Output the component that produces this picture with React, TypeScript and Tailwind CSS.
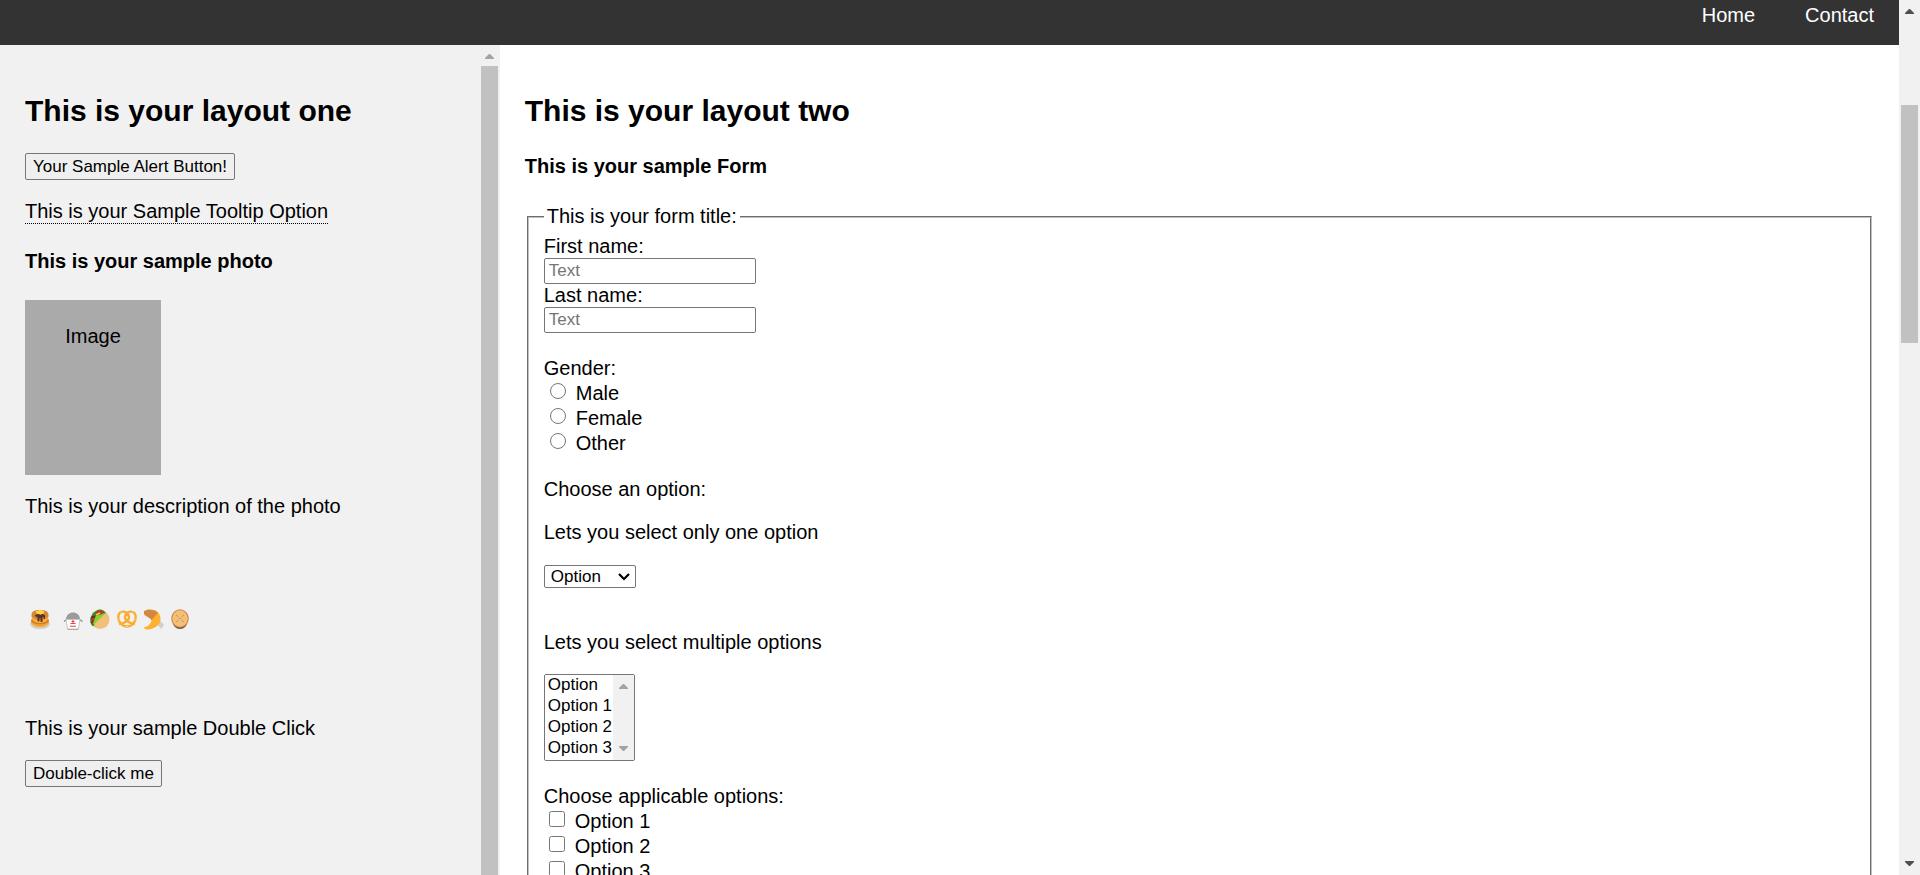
import React from "react";

function Arrow({ down = false, className }: { down?: boolean; className: string }) {
  return (
    <svg width="9" height="5" viewBox="0 0 9 5" className={className} fill="currentColor" aria-hidden="true">
      <path d={down ? "M0 0h9v1L5 5H4L0 1z" : "M4 0h1l4 4v1H0V4z"} />
    </svg>
  );
}

function Pancakes() {
  return (
    <svg width="20" height="21" viewBox="0 0 20 21" aria-hidden="true">
      <path d="M0 14c0 4 4 6 10 6s10-2 10-6l-3-2H3z" fill="#d0d0d0" />
      <path d="M1 12c0 4 4 6 9 6s9-2 9-6z" fill="#f9a72b" />
      <ellipse cx="10" cy="11.500" rx="9" ry="4" fill="#c87f35" />
      <path d="M1.500 7c0 5 4 7 8.500 7s8.500-2 8.500-7z" fill="#ffb02e" />
      <path d="M1.500 5.500C2 2 5 1 10 1s8 1 8.500 4.500c.5 3-3.500 5.500-8.500 5.500S1 8.500 1.500 5.500z" fill="#d3883e" />
      <path d="M5 6c2-1.500 8-1.500 10 0v3c0 1.500-1.500 1.500-1.500 0V8h-1v4c0 1.600-2 1.600-2 0V9h-1v2.500c0 1.500-2 1.500-2 0V8C5 8 5 7 5 6z" fill="#5b3428" />
      <path d="M6 2.500L10.500.500 14 2.500V4l-3.500 1.800L6 4z" fill="#fcd53f" />
    </svg>
  );
}

function Takeout() {
  return (
    <svg width="20" height="21" viewBox="0 0 20 21" aria-hidden="true">
      <path d="M1 12.500L4 10h12l3.500 2.500" fill="none" stroke="#858585" strokeWidth="1.200" />
      <path d="M3 10.500C3 6 6.500 3.500 10 3.500s7 2.500 7 7z" fill="#9b9b9b" />
      <path d="M3 10.500h14L15.500 20h-11z" fill="#fff" stroke="#c6c6c6" />
      <path d="M4.700 20.500h10.600" stroke="#aaa" />
      <path d="M8.500 12.500h3M10 11v3M7.500 14.500h5M7 17.200h6" stroke="#f03e45" strokeWidth="1.100" />
    </svg>
  );
}

function Flatbread() {
  return (
    <svg width="20" height="21" viewBox="0 0 20 21" aria-hidden="true">
      <circle cx="10" cy="10.500" r="9.500" fill="#f3c07b" />
      <path d="M1 15C-1 10 1 8 2 6c0-2 2-3 4-4 2-2 6-2 8 0l2 2L5 16c-2 2-3 1-4-1z" fill="#3f8a25" />
      <path d="M7 2h6l1 2-4 2-4 1zM2 8l3-2v3l-2 6-2-3z" fill="#d02a32" />
      <path d="M1 8.500l4-1M1 14l3-2" stroke="#5d2b35" strokeWidth="1.500" />
      <path d="M3 14l3-7 9-3-1 4-9 9z" fill="#83d52c" />
      <path d="M16.500 4.500C17 12 11 17 4 17.500l1-3L16 4z" fill="#f3c07b" />
      <path d="M6 6l4-2" stroke="#ffce46" strokeWidth="1.500" />
    </svg>
  );
}

function Pretzel() {
  return (
    <svg width="20" height="21" viewBox="0 0 20 21" fill="none" strokeLinecap="round" aria-hidden="true">
      <g stroke="#fbad2f" strokeWidth="2.400">
        <path d="M10 4.500C8 1.500 1.300 1.800 1.300 8c0 5.500 3.700 9.500 8.700 9.500s8.700-4 8.700-9.500c0-6.200-6.700-6.500-8.700-3.500" />
        <path d="M10 4.500C14 8 12 13 3 14.800M10 4.500C6 8 8 13 17 14.800" />
      </g>
      <path d="M4 3.500l1-.5M15 3l1 .5M2 10v1M18 10v1M9 17.500h2" stroke="#ffe2a8" strokeWidth=".7" />
    </svg>
  );
}

function PoultryLeg() {
  return (
    <svg width="20" height="21" viewBox="0 0 20 21" aria-hidden="true">
      <path d="M13 15l3-3 4 3.500c0 1-.5 1-1 1 .2 2-1 3-2.500 3z" fill="#d0d0d0" />
      <path d="M0 18c4 .5 9-5 7-9L10 1c4 1 7 5 6.500 10 0 5-7.500 9.500-12.500 9.500C2 20.500 0 20 0 18z" fill="#ffb02e" />
      <path d="M0 2C4-.5 10-.3 14 4l-6.500 7C5.500 8 1 7.500 0 5z" fill="#d3883e" />
    </svg>
  );
}

function Cookie() {
  return (
    <svg width="18" height="21" viewBox="0 0 18 21" aria-hidden="true">
      <ellipse cx="9" cy="12" rx="7.500" ry="8" fill="#6a5146" />
      <ellipse cx="9" cy="9.500" rx="8.800" ry="9.300" fill="#d3883e" />
      <ellipse cx="9" cy="9.500" rx="7.600" ry="8.200" fill="#f3c07b" />
      <path d="M5 6l2.500 2M13 6l-2.500 2M5 13l2.500-2M13 13l-2.500-2M8 9.500h2" stroke="#d99048" />
    </svg>
  );
}

const buttonClass =
  "block h-[27px] rounded-[2px] border border-[#767676] bg-[#efefef] px-[7px] text-[17px] leading-[25px]";
const inputClass =
  "block h-[26px] w-[212px] rounded-[2px] border border-[#767676] bg-white px-1 text-[17px] leading-[22px] placeholder:text-[#757575]";

export default function App() {
  return (
    <div className="flex h-screen overflow-hidden bg-white font-['Liberation_Sans',Arial,sans-serif] text-[20px] leading-[23px] text-black">
      <div className="flex min-w-0 flex-1 flex-col">
        <nav className="flex h-[45px] shrink-0 justify-end gap-[50px] bg-[#333] px-[25px] pt-1 text-white">
          <a href="#home">Home</a>
          <a href="#contact">Contact</a>
        </nav>

        <div className="flex min-h-0 flex-1">
          <aside className="flex min-w-0 flex-1 overflow-hidden bg-[#f1f1f1] px-[25px]">
            <div className="min-w-0 flex-1 pt-[49px]">
              <h2 className="mb-[25px] text-[30px] leading-[34px] font-bold">This is your layout one</h2>
              <button type="button" className={buttonClass}>Your Sample Alert Button!</button>
              <div className="mt-5 w-fit border-b border-dotted border-black">This is your Sample Tooltip Option</div>
              <h4 className="mt-[26px] mb-[27px] font-bold">This is your sample photo</h4>
              <div className="h-[175px] w-[136px] bg-[#aaa] pt-[25px] text-center">Image</div>
              <p className="mt-5">This is your description of the photo</p>
              <div className="mt-[91px] mb-[87px] ml-[5px] flex gap-[7px]">
                <div className="mr-[6px]"><Pancakes /></div>
                <Takeout />
                <Flatbread />
                <Pretzel />
                <PoultryLeg />
                <Cookie />
              </div>
              <p className="mb-5">This is your sample Double Click</p>
              <button type="button" className={buttonClass}>Double-click me</button>
            </div>
            <div className="-mr-[25px] flex w-[21px] shrink-0 flex-col items-center">
              <Arrow className="mt-[9px] mb-[7px] shrink-0 text-[#a3a3a3]" />
              <div className="w-[17px] flex-1 bg-[#c1c1c1]" />
            </div>
          </aside>

          <main className="min-w-0 flex-[3] overflow-hidden px-[25px] pt-[49px]">
            <h2 className="mb-[27px] text-[30px] leading-[34px] font-bold">This is your layout two</h2>
            <h4 className="mb-[27px] font-bold">This is your sample Form</h4>
            <form>
              <fieldset className="mx-[2px] border-2 border-[#c0c0c0] px-[15px] pb-4 [border-style:groove]">
                <legend className="px-[3px]">This is your form title:</legend>
                <label htmlFor="first" className="mt-[7px] block">First name:</label>
                <input id="first" type="text" placeholder="Text" className={inputClass} />
                <label htmlFor="last" className="block">Last name:</label>
                <input id="last" type="text" placeholder="Text" className={inputClass} />

                <div role="radiogroup" aria-labelledby="gender" className="mt-[23px] leading-[25px]">
                  <div id="gender">Gender:</div>
                  {["Male", "Female", "Other"].map((name) => (
                    <label key={name} className="flex w-fit items-start gap-[10px] pl-[6px]">
                      <input type="radio" name="gender" className="mt-[2px] size-4" />
                      {name}
                    </label>
                  ))}
                </div>

                <p className="mt-[22px]">Choose an option:</p>
                <label htmlFor="single" className="mt-5 mb-[21px] block w-fit">Lets you select only one option</label>
                <div className="grid w-[92px] items-center">
                  <select
                    id="single"
                    className="col-start-1 row-start-1 h-[23px] w-full appearance-none rounded-[2px] border border-[#767676] bg-white px-[6px] text-[17px] leading-[20px]"
                  >
                    <option>Option</option>
                    <option>Option 1</option>
                    <option>Option 2</option>
                    <option>Option 3</option>
                  </select>
                  <svg
                    width="12"
                    height="8"
                    viewBox="0 0 12 8"
                    className="pointer-events-none col-start-1 row-start-1 mr-[6px] justify-self-end"
                    fill="none"
                    stroke="#000"
                    strokeWidth="2.200"
                    aria-hidden="true"
                  >
                    <path d="M1 1l5 5 5-5" />
                  </svg>
                </div>

                <label htmlFor="multiple" className="mt-[43px] mb-5 block w-fit">Lets you select multiple options</label>
                <div className="flex h-[87px] w-[91px] overflow-hidden rounded-[2px] border border-[#767676]">
                  <select
                    id="multiple"
                    multiple
                    size={4}
                    className="h-full min-w-0 flex-1 appearance-none overflow-hidden bg-white text-[17px] leading-[20px] [scrollbar-width:none]"
                  >
                    {["Option", "Option 1", "Option 2", "Option 3"].map((name) => (
                      <option key={name} className="h-[21px] min-h-0 px-[3px] pt-0 pb-px leading-[20px]">{name}</option>
                    ))}
                  </select>
                  <div className="flex w-[21px] shrink-0 flex-col items-center justify-between bg-[#f1f1f1] py-[9px]">
                    <Arrow className="text-[#a3a3a3]" />
                    <Arrow down className="text-[#a3a3a3]" />
                  </div>
                </div>

                <div role="group" aria-labelledby="applicable" className="mt-[23px] leading-[25px]">
                  <div id="applicable">Choose applicable options:</div>
                  {["Option 1", "Option 2", "Option 3"].map((name) => (
                    <label key={name} className="flex w-fit items-start gap-[10px] pl-[5px]">
                      <input type="checkbox" className="mt-[2px] size-4" />
                      {name}
                    </label>
                  ))}
                </div>
              </fieldset>
            </form>
          </main>
        </div>
      </div>

      <div className="flex w-[21px] shrink-0 flex-col items-center bg-[#f1f1f1] py-[9px] text-[#505050]">
        <Arrow className="shrink-0" />
        <div className="mt-[91px] h-[238px] w-[17px] bg-[#c1c1c1]" />
        <Arrow down className="mt-auto shrink-0" />
      </div>
    </div>
  );
}
